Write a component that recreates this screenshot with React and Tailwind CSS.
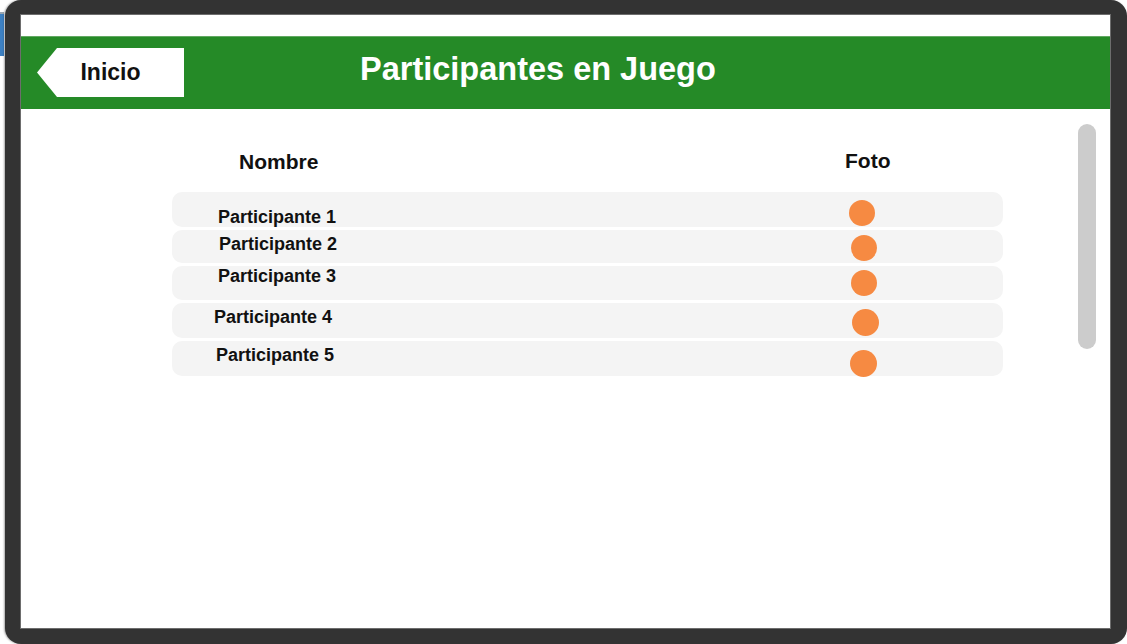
import React from 'react';

const participants = [
    { name: 'Participante 1', row: 'h-[35px]', text: 'w-[677px] pl-[46px] pt-[15px]', dot: 'mt-[8px] size-[26px]' },
    { name: 'Participante 2', row: 'h-[33px]', text: 'w-[679px] pl-[47px] pt-[4px]', dot: 'mt-[5px] size-[26px]' },
    { name: 'Participante 3', row: 'h-[34px]', text: 'w-[679px] pl-[46px] pt-[0px]', dot: 'mt-[4px] size-[26px]' },
    { name: 'Participante 4', row: 'h-[35px]', text: 'w-[680px] pl-[42px] pt-[4px]', dot: 'mt-[6px] size-[27px]' },
    { name: 'Participante 5', row: 'h-[35px]', text: 'w-[678px] pl-[44px] pt-[4px]', dot: 'mt-[9px] size-[27px]' },
];

const App = () => {
    return (
        <div className="w-[1127px] h-[644px] bg-white flex font-['Liberation_Sans',Arial,sans-serif] overflow-hidden">
            {/* window behind the frame */}
            <div className="w-[5px] shrink-0 pt-[12px]">
                <div className="h-[44px] w-[4px] bg-[#3d80c2] border-t-2 border-[#9aa7b3]"></div>
            </div>

            {/* Device frame */}
            <div className="w-[1122px] h-[644px] bg-[#333333] rounded-[16px] pt-[15px] pl-[16px] pr-[17px] pb-[16px] shadow-[-1px_0_2px_rgba(0,0,0,0.35)]">
                <div className="w-[1089px] h-[613px] bg-white flex flex-col shadow-[0_0_0_1px_#6d6d6d]">
                    <div className="h-[21px] shrink-0"></div>

                    {/* Header */}
                    <div className="h-[73px] shrink-0 bg-[#258a27] border-t border-[#62a862] flex items-start">
                        <div className="ml-[16px] mt-[11px] w-[147px] h-[49px] bg-white flex items-center justify-center [clip-path:polygon(20px_0,100%_0,100%_100%,20px_100%,0_50%)]">
                            <span className="text-[23px] font-bold text-[#111] leading-none">Inicio</span>
                        </div>
                        <h1 className="ml-[176px] mt-[14px] text-[32.5px] leading-[36px] font-bold text-white">
                            Participantes en Juego
                        </h1>
                    </div>

                    {/* Content */}
                    <div className="flex flex-1">
                        <div className="flex-1 pl-[151px]">
                            <div className="mt-[41px] w-[831px] flex text-[21px] leading-[24px] font-bold text-[#111]">
                                <span className="w-[673px] pl-[67px]">Nombre</span>
                                <span className="-mt-[1px]">Foto</span>
                            </div>

                            <ul className="mt-[18px] w-[831px] flex flex-col gap-[3px]">
                                {participants.map(p => (
                                    <li key={p.name} className={`${p.row} bg-[#f4f4f4] rounded-[10px] flex items-start`}>
                                        <div className={`${p.text} shrink-0 text-[18px] leading-[20px] font-bold text-[#111]`}>
                                            {p.name}
                                        </div>
                                        <div className={`${p.dot} rounded-full bg-[#f68a42] shrink-0`}></div>
                                    </li>
                                ))}
                            </ul>
                        </div>

                        {/* Scrollbar */}
                        <div className="mt-[15px] mr-[14px] w-[18px] h-[225px] rounded-full bg-[#cccccc]"></div>
                    </div>
                </div>
            </div>
        </div>
    );
};

export default App;
